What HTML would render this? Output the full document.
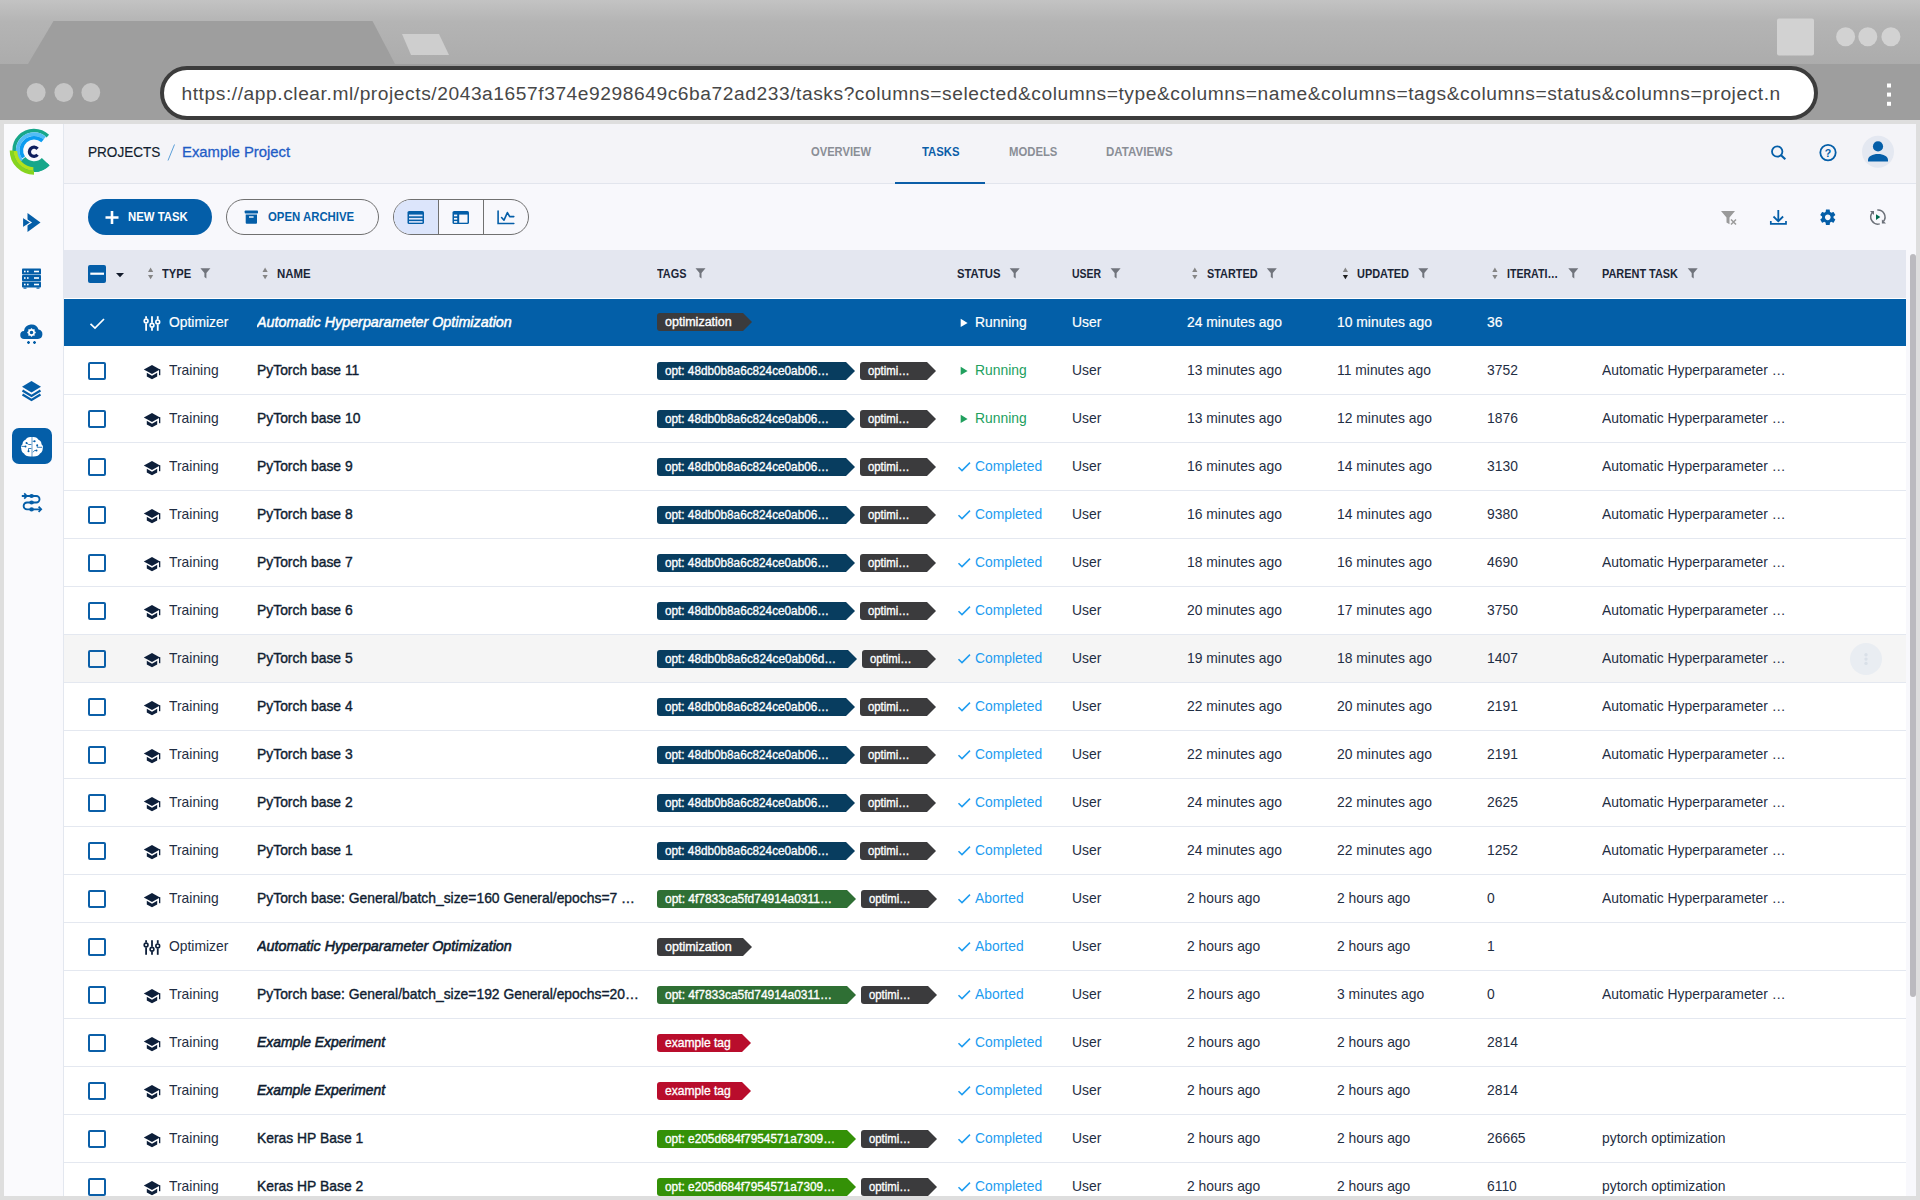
<!DOCTYPE html><html><head><meta charset="utf-8"><style>
*{box-sizing:border-box;margin:0;padding:0}
html,body{width:1920px;height:1200px;overflow:hidden}
body{background:#dedede;font-family:"Liberation Sans",sans-serif;position:relative}
.a{position:absolute}
.t{position:absolute;white-space:nowrap}
.sx{display:inline-block;transform-origin:0 50%}
svg{position:absolute;overflow:visible}
.row{position:absolute;left:64px;width:1842px;height:48px;background:#fff;overflow:hidden}
.row .t{line-height:48px;top:0;font-size:15px;color:#1f2e43;transform:scaleX(.925);transform-origin:0 0}
.row .nm{color:#0f1d31;-webkit-text-stroke:0.4px #0f1d31}
.row .it{font-style:italic;-webkit-text-stroke:0.6px currentColor}
.tag{position:absolute;top:15px;height:18px;line-height:18px;font-size:12.5px;-webkit-text-stroke:0.35px #fff;color:#fff;padding-left:8px;white-space:nowrap;overflow:hidden;border-radius:3px 0 0 3px}
.dv{position:absolute;left:64px;width:1842px;height:1px;background:#e4e8f0}
.cb{position:absolute;left:24px;top:16px;width:18px;height:18px;border:2px solid #0b5fa8;border-radius:2px}
.hd{position:absolute;top:250px;line-height:48px;font-size:12.5px;font-weight:bold;color:#1b2536;white-space:nowrap}
.hd .sx{transform:scaleX(.905)}
.nav{position:absolute;top:121.5px;line-height:60px;font-size:13px;font-weight:bold;color:#8a8e96;white-space:nowrap}
.nav .sx{transform:scaleX(.87)}
</style></head><body><div class="a" style="left:0;top:0;width:1920px;height:64px;background:linear-gradient(#c3c3c3 0px,#b4b4b4 22px,#acacac 64px)"></div>
<div class="a" style="left:0;top:64px;width:1920px;height:56px;background:#9e9e9e"></div>
<svg style="left:0;top:0" width="1920" height="120"><polygon points="28,64 53.5,21 372.5,21 395,64" fill="#9e9e9e"/><polygon points="402,34 439,34 449,55 411,55" fill="#cecece"/><circle cx="36.2" cy="92.5" r="9.4" fill="#c6c6c6"/><circle cx="63.8" cy="92.5" r="9.4" fill="#c6c6c6"/><circle cx="90.8" cy="92.5" r="9.4" fill="#c6c6c6"/><rect x="1777" y="18.5" width="37" height="37" rx="2" fill="#d2d2d2"/><circle cx="1845.6" cy="36.8" r="9.5" fill="#d2d2d2"/><circle cx="1867.8" cy="36.8" r="9.5" fill="#d2d2d2"/><circle cx="1890.9" cy="36.8" r="9.5" fill="#d2d2d2"/><rect x="1887" y="83.5" width="4" height="4" fill="#fff"/><rect x="1887" y="92.6" width="4" height="4" fill="#fff"/><rect x="1887" y="101.8" width="4" height="4" fill="#fff"/></svg>
<div class="a" style="left:160px;top:66px;width:1658px;height:54px;border:4px solid #3c3c3c;border-radius:27px;background:#fff"></div>
<div class="t" style="left:181.5px;top:82px;font-size:19.2px;letter-spacing:0.56px;line-height:24px;color:#474747">https://app.clear.ml/projects/2043a1657f374e9298649c6ba72ad233/tasks?columns=selected&amp;columns=type&amp;columns=name&amp;columns=tags&amp;columns=status&amp;columns=project.n</div>
<div class="a" style="left:4px;top:124px;width:1912px;height:1072px;background:#f8f8fc"></div>
<div class="a" style="left:4px;top:124px;width:60px;height:1072px;background:#fafafd;border-right:1px solid #e3e7ef"></div>
<div class="a" style="left:64px;top:124px;width:1852px;height:60px;background:#f4f4f8;border-bottom:1px solid #e2e5ed"></div>
<svg style="left:0;top:0" width="70" height="200"><path d="M45.65,161.65 A16.2,16.2 0 0 1 21.23,160.37" stroke="#17a78a" stroke-width="10.6" fill="none"/><path d="M48.31,164.22 A19.9,19.9 0 1 1 47.82,136.09" stroke="#17a78a" stroke-width="3.6" fill="none"/><path d="M21.51,160.88 A16.3,16.3 0 0 1 44.69,138.10" stroke="#52bdf5" stroke-width="3.6" fill="none"/><path d="M23.47,157.50 A12.7,12.7 0 0 1 42.50,140.96" stroke="#0b9cf0" stroke-width="3.6" fill="none"/><path d="M34.00,172.70 A22.3,22.3 0 0 1 11.70,150.40" stroke="#86d41e" stroke-width="4" fill="none"/><path d="M33.35,168.99 A18.6,18.6 0 0 1 15.41,151.05" stroke="#b2e21c" stroke-width="3.6" fill="none"/><path d="M37.52,154.76 A4.6,4.6 0 1 1 37.52,148.84" stroke="#0f1f5e" stroke-width="3.3" fill="none"/></svg>
<svg style="left:0;top:0" width="64" height="560"><polygon points="27.5,213 40.5,222.5 27.5,232" fill="#045ea8"/><polygon points="22.5,217 31,222.5 22.5,228" fill="#045ea8" stroke="#fafafd" stroke-width="1.2"/><rect x="22" y="268.5" width="19" height="6" rx="0.8" fill="#045ea8"/><rect x="24" y="270.7" width="1.6" height="1.6" fill="#fff"/><rect x="27" y="270.7" width="1.6" height="1.6" fill="#fff"/><rect x="34" y="270.7" width="5" height="1.6" fill="#fff"/><rect x="22" y="275" width="19" height="6" rx="0.8" fill="#045ea8"/><rect x="24" y="277.2" width="1.6" height="1.6" fill="#fff"/><rect x="27" y="277.2" width="1.6" height="1.6" fill="#fff"/><rect x="34" y="277.2" width="5" height="1.6" fill="#fff"/><rect x="22" y="281.5" width="19" height="6" rx="0.8" fill="#045ea8"/><rect x="24" y="283.7" width="1.6" height="1.6" fill="#fff"/><rect x="27" y="283.7" width="1.6" height="1.6" fill="#fff"/><rect x="34" y="283.7" width="5" height="1.6" fill="#fff"/><rect x="23.5" y="287.5" width="3" height="1.2" fill="#045ea8"/><rect x="36.5" y="287.5" width="3" height="1.2" fill="#045ea8"/><path d="M24.5,339 a4,4 0 0 1 -0.5,-8 a7.5,7.5 0 0 1 14.5,-1.5 a4.8,4.8 0 0 1 -0.5,9.5 z" fill="#045ea8"/><circle cx="31.5" cy="332.5" r="2.6" fill="none" stroke="#fff" stroke-width="1.6"/><line x1="34.10" y1="332.50" x2="35.70" y2="332.50" stroke="#fff" stroke-width="1.3"/><line x1="33.34" y1="334.34" x2="34.47" y2="335.47" stroke="#fff" stroke-width="1.3"/><line x1="31.50" y1="335.10" x2="31.50" y2="336.70" stroke="#fff" stroke-width="1.3"/><line x1="29.66" y1="334.34" x2="28.53" y2="335.47" stroke="#fff" stroke-width="1.3"/><line x1="28.90" y1="332.50" x2="27.30" y2="332.50" stroke="#fff" stroke-width="1.3"/><line x1="29.66" y1="330.66" x2="28.53" y2="329.53" stroke="#fff" stroke-width="1.3"/><line x1="31.50" y1="329.90" x2="31.50" y2="328.30" stroke="#fff" stroke-width="1.3"/><line x1="33.34" y1="330.66" x2="34.47" y2="329.53" stroke="#fff" stroke-width="1.3"/><path d="M27,342.5 h3 M28.5,341 v3 M33,342.5 h3 M34.5,341 v3" stroke="#045ea8" stroke-width="1.3"/><polygon points="22,386.8 31.5,381 41,386.8 31.5,392.5" fill="#045ea8"/><polyline points="22.5,390.5 31.5,396 40.5,390.5" fill="none" stroke="#045ea8" stroke-width="2.2"/><polyline points="22.5,394.5 31.5,400 40.5,394.5" fill="none" stroke="#045ea8" stroke-width="2.2"/><rect x="12" y="428" width="40" height="36" rx="7" fill="#045ea8"/><path d="M31.7,437 C28.5,436.6 26.5,437.8 25.5,439.8 C23.5,440.3 22.5,442.3 22.5,444.3 C21,445.3 20.6,447.3 21.3,448.5 C21.3,451 22.3,452.6 24,453.5 C25,455.5 27.5,456.7 31.7,456.4 Z" fill="#fff"/><path d="M32.3,437 C35.5,436.6 37.5,437.8 38.5,439.8 C40.5,440.3 41.5,442.3 41.5,444.3 C43,445.3 43.4,447.3 42.7,448.5 C42.7,451 41.7,452.6 40,453.5 C39,455.5 36.5,456.7 32.3,456.4 Z" fill="#fff"/><path d="M26.5,443 l2.2,1.5 h2.7 M21.5,446.4 h4 M28.5,451.3 v-2.8 h2.9 M32.6,441.3 h2 M37.2,445.3 v2 h5 M36.5,450.5 h-2 l-1.5,1.8" stroke="#045ea8" stroke-width="0.8" fill="none"/><circle cx="26.5" cy="443" r="1" fill="#045ea8"/><circle cx="25.5" cy="446.4" r="1" fill="#045ea8"/><circle cx="28.5" cy="451.3" r="1" fill="#045ea8"/><circle cx="34.6" cy="441.3" r="1" fill="#045ea8"/><circle cx="37.2" cy="445.3" r="1" fill="#045ea8"/><circle cx="36.5" cy="450.5" r="1" fill="#045ea8"/><path d="M21.8,496 H36.3 A3.25,3.25 0 0 1 36.3,502.5 H27 A3.4,3.4 0 0 0 27,509.3 H40.5" fill="none" stroke="#045ea8" stroke-width="1.8"/><ellipse cx="31.6" cy="496" rx="2.3" ry="2.1" fill="#045ea8"/><ellipse cx="31.6" cy="502.5" rx="2.3" ry="2.1" fill="#045ea8"/><ellipse cx="31.6" cy="509.4" rx="2.3" ry="2.1" fill="#045ea8"/><polyline points="24.2,493.4 26.8,496 24.2,498.6" fill="none" stroke="#045ea8" stroke-width="1.7"/><polyline points="38.6,506.7 41.2,509.3 38.6,511.9" fill="none" stroke="#045ea8" stroke-width="1.7"/></svg>
<div class="t" style="left:88px;top:121.5px;line-height:60px;font-size:15px;color:#121d2f;-webkit-text-stroke:0.15px #121d2f"><span class="sx" style="transform:scaleX(.905)">PROJECTS</span></div>
<svg style="left:0;top:0" width="10" height="10"><line x1="174.5" y1="144.5" x2="168" y2="160.5" stroke="#5b9fd8" stroke-width="1"/></svg>
<div class="t" style="left:181.5px;top:121.5px;line-height:60px;font-size:15px;color:#1f5cc6;-webkit-text-stroke:0.3px #1f5cc6"><span class="sx" style="transform:scaleX(.99)">Example Project</span></div>
<div class="nav" style="left:811px"><span class="sx" style="transform:scaleX(0.859)">OVERVIEW</span></div>
<div class="nav" style="left:922px;color:#0b5ea8"><span class="sx" style="transform:scaleX(0.870)">TASKS</span></div>
<div class="nav" style="left:1009.3px"><span class="sx" style="transform:scaleX(0.870)">MODELS</span></div>
<div class="nav" style="left:1106px"><span class="sx" style="transform:scaleX(0.888)">DATAVIEWS</span></div>
<div class="a" style="left:895px;top:182px;width:90px;height:2px;background:#0b5ea8"></div>
<svg style="left:0;top:0" width="10" height="10"><circle cx="1777.2" cy="151.5" r="5.2" fill="none" stroke="#045ea8" stroke-width="1.8"/><line x1="1780.8" y1="155" x2="1785.3" y2="159.3" stroke="#045ea8" stroke-width="2.1"/><circle cx="1828" cy="152.6" r="7.7" fill="none" stroke="#045ea8" stroke-width="1.8"/><text x="1828.1" y="156.8" text-anchor="middle" font-family="Liberation Sans" font-weight="bold" font-size="10.6" fill="#045ea8">?</text><circle cx="1878" cy="151.8" r="16" fill="#e4e8f1"/><circle cx="1878" cy="146.4" r="5.1" fill="#045ea8"/><path d="M1868,161.5 v-1.5 c0,-3.5 4.5,-6 10,-6 c5.5,0 10,2.5 10,6 v1.5 z" fill="#045ea8"/></svg>
<div class="a" style="left:88px;top:199px;width:124px;height:36px;border-radius:18px;background:#045ea8"></div>
<svg style="left:0;top:0" width="10" height="10"><path d="M112,211 v13 M105.5,217.5 h13" stroke="#fff" stroke-width="2.6"/></svg>
<div class="t" style="left:128.3px;top:199px;line-height:36px;font-size:12.5px;font-weight:bold;color:#fff"><span class="sx" style="transform:scaleX(.908)">NEW TASK</span></div>
<div class="a" style="left:226px;top:199px;width:153px;height:36px;border-radius:18px;border:1px solid #707070"></div>
<svg style="left:0;top:0" width="10" height="10"><rect x="244.7" y="210.5" width="13.3" height="3" rx="0.8" fill="#045ea8"/><path d="M245.7,214.5 h11.3 v8.3 a1,1 0 0 1 -1,1 h-9.3 a1,1 0 0 1 -1,-1 z" fill="#045ea8"/><rect x="249" y="216.3" width="4.6" height="1.4" fill="#f8f8fc"/></svg>
<div class="t" style="left:267.5px;top:199px;line-height:36px;font-size:12.5px;font-weight:bold;color:#045ea8"><span class="sx" style="transform:scaleX(.91)">OPEN ARCHIVE</span></div>
<div class="a" style="left:393px;top:199px;width:136px;height:36px;border-radius:18px;border:1px solid #707070;overflow:hidden"><div class="a" style="left:0;top:0;width:45px;height:34px;background:#dce5fb"></div><div class="a" style="left:44px;top:0;width:1px;height:34px;background:#707070"></div><div class="a" style="left:89px;top:0;width:1px;height:34px;background:#707070"></div></div>
<svg style="left:0;top:0" width="10" height="10"><rect x="407.5" y="210.9" width="16.5" height="13.1" rx="1.6" fill="#045ea8"/><rect x="409" y="214.6" width="13.5" height="1.7" fill="#dce5fb"/><rect x="409" y="217.9" width="13.5" height="1.7" fill="#dce5fb"/><rect x="409" y="221.1" width="13.5" height="1.6" fill="#dce5fb"/><rect x="452.5" y="210.9" width="16.5" height="13.1" rx="1.6" fill="#045ea8"/><rect x="454" y="214.6" width="3.2" height="1.7" fill="#f8f8fc"/><rect x="454" y="217.9" width="3.2" height="1.7" fill="#f8f8fc"/><rect x="454" y="221.1" width="3.2" height="1.6" fill="#f8f8fc"/><rect x="459.2" y="214.6" width="8.3" height="8.1" fill="#f8f8fc"/><path d="M498.1,211 v12.5 h15.7" fill="none" stroke="#045ea8" stroke-width="1.6" stroke-linecap="round"/><polyline points="501.6,217.5 504,220.2 507.4,212.6 509.7,216.6 513.8,216.6" fill="none" stroke="#045ea8" stroke-width="1.6" stroke-linecap="round" stroke-linejoin="round"/><polygon points="1721,211 1735,211 1729.5,217.5 1729.5,224.2 1726.5,222.5 1726.5,217.5" fill="#9a9a9a"/><path d="M1731,219.5 l5,5 M1736,219.5 l-5,5" stroke="#9a9a9a" stroke-width="1.5"/><path d="M1778.3,210 v11 M1773.5,216.5 l4.8,4.8 l4.8,-4.8" fill="none" stroke="#045ea8" stroke-width="1.8"/><path d="M1770.8,221 v2.8 h15.2 v-2.8" fill="none" stroke="#045ea8" stroke-width="1.7"/><path transform="translate(1818.2,207.7) scale(0.8)" fill-rule="evenodd" fill="#045ea8" d="M19.14,12.94c0.04-0.3,0.06-0.61,0.06-0.94c0-0.32-0.02-0.64-0.07-0.94l2.03-1.58c0.18-0.14,0.23-0.41,0.12-0.61 l-1.92-3.32c-0.12-0.22-0.37-0.29-0.59-0.22l-2.39,0.96c-0.5-0.38-1.03-0.7-1.62-0.94L14.4,2.81c-0.04-0.24-0.24-0.41-0.48-0.41 h-3.84c-0.24,0-0.43,0.17-0.47,0.41L9.25,5.35C8.66,5.59,8.12,5.92,7.63,6.29L5.240,5.33c-0.22-0.08-0.47,0-0.59,0.22L2.74,8.87 C2.62,9.08,2.66,9.340,2.86,9.48l2.03,1.58C4.84,11.36,4.8,11.69,4.8,12s0.02,0.64,0.07,0.94l-2.03,1.58 c-0.18,0.14-0.23,0.41-0.12,0.61l1.92,3.32c0.12,0.22,0.37,0.29,0.59,0.22l2.39-0.96c0.5,0.38,1.03,0.7,1.62,0.94l0.36,2.54 c0.05,0.24,0.24,0.41,0.48,0.41h3.84c0.24,0,0.44-0.17,0.47-0.41l0.36-2.54c0.59-0.24,1.13-0.56,1.62-0.94l2.39,0.96 c0.22,0.08,0.47,0,0.59-0.22l1.92-3.32c0.12-0.22,0.07-0.47-0.12-0.61L19.14,12.94z M12,15.6c-1.98,0-3.6-1.62-3.6-3.6 s1.62-3.6,3.6-3.6s3.6,1.62,3.6,3.6S13.98,15.6,12,15.6z"/><path d="M1879.74,223.86 A7.1,7.1 0 0 1 1872.62,212.25" fill="none" stroke="#6b7078" stroke-width="1.5"/><path d="M1877.28,209.93 A7.1,7.1 0 0 1 1883.49,221.37" fill="none" stroke="#6b7078" stroke-width="1.5"/><polygon points="1870,211 1874,211 1874,215" fill="#6b7078"/><polygon points="1881.9,219.5 1881.9,223.6 1886,223.6" fill="#6b7078"/><polygon points="1876,214.2 1880.3,217 1876,219.9" fill="#036b4f"/></svg>
<div class="a" style="left:64px;top:250px;width:1842px;height:48px;background:#e4e7f0"></div>
<svg style="left:0;top:0" width="10" height="10"><rect x="88" y="265" width="18" height="18" rx="2" fill="#045ea8"/><rect x="90.3" y="272.6" width="13.7" height="2.2" fill="#fff"/><polygon points="116,273 124,273 120,277.3" fill="#121a2a"/><polygon points="148,271.9 153.2,271.9 150.6,267.6" fill="#858585"/><polygon points="148,274.9 153.2,274.9 150.6,279.2" fill="#858585"/><polygon points="262.5,271.9 267.7,271.9 265.1,267.6" fill="#858585"/><polygon points="262.5,274.9 267.7,274.9 265.1,279.2" fill="#858585"/><polygon points="1192.2,271.9 1197.4,271.9 1194.8,267.6" fill="#858585"/><polygon points="1192.2,274.9 1197.4,274.9 1194.8,279.2" fill="#858585"/><polygon points="1492.3,271.9 1497.5,271.9 1494.8999999999999,267.6" fill="#858585"/><polygon points="1492.3,274.9 1497.5,274.9 1494.8999999999999,279.2" fill="#858585"/><polygon points="1342.8,271.9 1348.0,271.9 1345.3999999999999,267.6" fill="#858585"/><polygon points="1342.8,274.9 1348.0,274.9 1345.3999999999999,279.2" fill="#1e1e1e"/><polygon points="200.4,268.3 210.4,268.3 206.4,273 206.4,278.5 204.4,277 204.4,273" fill="#70747c"/><polygon points="695.5,268.3 705.5,268.3 701.5,273 701.5,278.5 699.5,277 699.5,273" fill="#70747c"/><polygon points="1009.7,268.3 1019.7,268.3 1015.7,273 1015.7,278.5 1013.7,277 1013.7,273" fill="#70747c"/><polygon points="1110.6,268.3 1120.6,268.3 1116.6,273 1116.6,278.5 1114.6,277 1114.6,273" fill="#70747c"/><polygon points="1266.8,268.3 1276.8,268.3 1272.8,273 1272.8,278.5 1270.8,277 1270.8,273" fill="#70747c"/><polygon points="1418.3,268.3 1428.3,268.3 1424.3,273 1424.3,278.5 1422.3,277 1422.3,273" fill="#70747c"/><polygon points="1568.3,268.3 1578.3,268.3 1574.3,273 1574.3,278.5 1572.3,277 1572.3,273" fill="#70747c"/><polygon points="1687.7,268.3 1697.7,268.3 1693.7,273 1693.7,278.5 1691.7,277 1691.7,273" fill="#70747c"/></svg>
<div class="hd" style="left:162px"><span class="sx" style="transform:scaleX(0.894)">TYPE</span></div>
<div class="hd" style="left:277.2px"><span class="sx" style="transform:scaleX(0.913)">NAME</span></div>
<div class="hd" style="left:657.3px"><span class="sx" style="transform:scaleX(0.870)">TAGS</span></div>
<div class="hd" style="left:957px"><span class="sx" style="transform:scaleX(0.903)">STATUS</span></div>
<div class="hd" style="left:1072.2px"><span class="sx" style="transform:scaleX(0.838)">USER</span></div>
<div class="hd" style="left:1207.2px"><span class="sx" style="transform:scaleX(0.871)">STARTED</span></div>
<div class="hd" style="left:1357.3px"><span class="sx" style="transform:scaleX(0.874)">UPDATED</span></div>
<div class="hd" style="left:1507.3px"><span class="sx" style="transform:scaleX(0.847)">ITERATI…</span></div>
<div class="hd" style="left:1602.3px"><span class="sx" style="transform:scaleX(0.873)">PARENT TASK</span></div>
<div class="row" style="top:298px;background:#035fa8"><div class="a" style="left:0;top:0;width:1842px;height:1px;background:#fff"></div><svg style="left:0;top:-0.5px" width="10" height="10"><polyline points="26.5,25.8 31,30.1 40,21" fill="none" stroke="#fff" stroke-width="1.7"/><line x1="82.1" y1="18.2" x2="82.1" y2="20.6" stroke="#fff" stroke-width="1.8"/><line x1="82.1" y1="25.4" x2="82.1" y2="32.8" stroke="#fff" stroke-width="1.8"/><circle cx="82.1" cy="23.0" r="1.9" fill="none" stroke="#fff" stroke-width="1.6"/><line x1="88.0" y1="18.2" x2="88.0" y2="24.85" stroke="#fff" stroke-width="1.8"/><line x1="88.0" y1="29.65" x2="88.0" y2="32.8" stroke="#fff" stroke-width="1.8"/><circle cx="88.0" cy="27.25" r="1.9" fill="none" stroke="#fff" stroke-width="1.6"/><line x1="93.75" y1="18.2" x2="93.75" y2="21.5" stroke="#fff" stroke-width="1.8"/><line x1="93.75" y1="26.299999999999997" x2="93.75" y2="32.8" stroke="#fff" stroke-width="1.8"/><circle cx="93.75" cy="23.9" r="1.9" fill="none" stroke="#fff" stroke-width="1.6"/><polygon points="896.7,20.8 903.6,24.9 896.7,29" fill="#fff"/></svg><div class="t" style="left:105.3px;color:#fff;top:-0.5px;-webkit-text-stroke:0.2px #fff">Optimizer</div><div class="t nm it" style="left:193.3px;width:418px;overflow:hidden;transform:scaleX(.955);width:405px;color:#fff;-webkit-text-stroke:0.5px #fff;top:-0.5px">Automatic Hyperparameter Optimization</div><div class="tag" style="top:15px;left:593px;width:95px;background:#3b3b3d;clip-path:polygon(0 0,86px 0,95px 9px,86px 18px,0 18px)"><span class="sx" style="transform:scaleX(1.001)">optimization</span></div><div class="t" style="left:911.4px;color:#fff;top:-0.5px;-webkit-text-stroke:0.2px #fff">Running</div><div class="t" style="left:1008.3px;color:#fff;top:-0.5px;-webkit-text-stroke:0.2px #fff">User</div><div class="t" style="left:1123px;color:#fff;top:-0.5px;-webkit-text-stroke:0.2px #fff">24 minutes ago</div><div class="t" style="left:1273px;color:#fff;top:-0.5px;-webkit-text-stroke:0.2px #fff">10 minutes ago</div><div class="t" style="left:1423px;color:#fff;top:-0.5px;-webkit-text-stroke:0.2px #fff">36</div></div>
<div class="row" style="top:346px;background:#fff"><div class="cb"></div><svg style="left:0;top:0" width="10" height="10"><polygon points="79.8,23.5 88,19 96,23.5 88,28" fill="#0d1f3a"/><path d="M82.8,26.8 v3.6 l5.2,2.8 l5.2,-2.8 v-3.6 l-5.2,2.9 z" fill="#0d1f3a"/><rect x="95" y="23.2" width="1.3" height="6" fill="#0d1f3a"/><polygon points="896.7,20.8 903.6,24.9 896.7,29" fill="#21a05e"/></svg><div class="t" style="left:105.3px">Training</div><div class="t nm" style="left:193.3px;width:418px;overflow:hidden">PyTorch base 11</div><div class="tag" style="top:16px;left:593px;width:198px;background:#083d5f;clip-path:polygon(0 0,189px 0,198px 9px,189px 18px,0 18px)"><span class="sx" style="transform:scaleX(0.940)">opt: 48db0b8a6c824ce0ab06…</span></div><div class="tag" style="top:16px;left:796px;width:76px;background:#3b3b3d;clip-path:polygon(0 0,67px 0,76px 9px,67px 18px,0 18px)"><span class="sx" style="transform:scaleX(0.905)">optimi…</span></div><div class="t" style="left:911.4px;color:#21a05e">Running</div><div class="t" style="left:1008.3px">User</div><div class="t" style="left:1123px">13 minutes ago</div><div class="t" style="left:1273px">11 minutes ago</div><div class="t" style="left:1423px">3752</div><div class="t" style="left:1538px">Automatic Hyperparameter …</div></div>
<div class="row" style="top:394px;background:#fff"><div class="a" style="left:0;top:0;width:1842px;height:1px;background:#e4e8f0"></div><div class="cb"></div><svg style="left:0;top:0" width="10" height="10"><polygon points="79.8,23.5 88,19 96,23.5 88,28" fill="#0d1f3a"/><path d="M82.8,26.8 v3.6 l5.2,2.8 l5.2,-2.8 v-3.6 l-5.2,2.9 z" fill="#0d1f3a"/><rect x="95" y="23.2" width="1.3" height="6" fill="#0d1f3a"/><polygon points="896.7,20.8 903.6,24.9 896.7,29" fill="#21a05e"/></svg><div class="t" style="left:105.3px">Training</div><div class="t nm" style="left:193.3px;width:418px;overflow:hidden">PyTorch base 10</div><div class="tag" style="top:16px;left:593px;width:198px;background:#083d5f;clip-path:polygon(0 0,189px 0,198px 9px,189px 18px,0 18px)"><span class="sx" style="transform:scaleX(0.940)">opt: 48db0b8a6c824ce0ab06…</span></div><div class="tag" style="top:16px;left:796px;width:76px;background:#3b3b3d;clip-path:polygon(0 0,67px 0,76px 9px,67px 18px,0 18px)"><span class="sx" style="transform:scaleX(0.905)">optimi…</span></div><div class="t" style="left:911.4px;color:#21a05e">Running</div><div class="t" style="left:1008.3px">User</div><div class="t" style="left:1123px">13 minutes ago</div><div class="t" style="left:1273px">12 minutes ago</div><div class="t" style="left:1423px">1876</div><div class="t" style="left:1538px">Automatic Hyperparameter …</div></div>
<div class="row" style="top:442px;background:#fff"><div class="a" style="left:0;top:0;width:1842px;height:1px;background:#e4e8f0"></div><div class="cb"></div><svg style="left:0;top:0" width="10" height="10"><polygon points="79.8,23.5 88,19 96,23.5 88,28" fill="#0d1f3a"/><path d="M82.8,26.8 v3.6 l5.2,2.8 l5.2,-2.8 v-3.6 l-5.2,2.9 z" fill="#0d1f3a"/><rect x="95" y="23.2" width="1.3" height="6" fill="#0d1f3a"/><polyline points="894.5,25.2 898,28.6 906,20.6" fill="none" stroke="#1d9cf0" stroke-width="1.5"/></svg><div class="t" style="left:105.3px">Training</div><div class="t nm" style="left:193.3px;width:418px;overflow:hidden">PyTorch base 9</div><div class="tag" style="top:16px;left:593px;width:198px;background:#083d5f;clip-path:polygon(0 0,189px 0,198px 9px,189px 18px,0 18px)"><span class="sx" style="transform:scaleX(0.940)">opt: 48db0b8a6c824ce0ab06…</span></div><div class="tag" style="top:16px;left:796px;width:76px;background:#3b3b3d;clip-path:polygon(0 0,67px 0,76px 9px,67px 18px,0 18px)"><span class="sx" style="transform:scaleX(0.905)">optimi…</span></div><div class="t" style="left:911.4px;color:#1d9cf0">Completed</div><div class="t" style="left:1008.3px">User</div><div class="t" style="left:1123px">16 minutes ago</div><div class="t" style="left:1273px">14 minutes ago</div><div class="t" style="left:1423px">3130</div><div class="t" style="left:1538px">Automatic Hyperparameter …</div></div>
<div class="row" style="top:490px;background:#fff"><div class="a" style="left:0;top:0;width:1842px;height:1px;background:#e4e8f0"></div><div class="cb"></div><svg style="left:0;top:0" width="10" height="10"><polygon points="79.8,23.5 88,19 96,23.5 88,28" fill="#0d1f3a"/><path d="M82.8,26.8 v3.6 l5.2,2.8 l5.2,-2.8 v-3.6 l-5.2,2.9 z" fill="#0d1f3a"/><rect x="95" y="23.2" width="1.3" height="6" fill="#0d1f3a"/><polyline points="894.5,25.2 898,28.6 906,20.6" fill="none" stroke="#1d9cf0" stroke-width="1.5"/></svg><div class="t" style="left:105.3px">Training</div><div class="t nm" style="left:193.3px;width:418px;overflow:hidden">PyTorch base 8</div><div class="tag" style="top:16px;left:593px;width:198px;background:#083d5f;clip-path:polygon(0 0,189px 0,198px 9px,189px 18px,0 18px)"><span class="sx" style="transform:scaleX(0.940)">opt: 48db0b8a6c824ce0ab06…</span></div><div class="tag" style="top:16px;left:796px;width:76px;background:#3b3b3d;clip-path:polygon(0 0,67px 0,76px 9px,67px 18px,0 18px)"><span class="sx" style="transform:scaleX(0.905)">optimi…</span></div><div class="t" style="left:911.4px;color:#1d9cf0">Completed</div><div class="t" style="left:1008.3px">User</div><div class="t" style="left:1123px">16 minutes ago</div><div class="t" style="left:1273px">14 minutes ago</div><div class="t" style="left:1423px">9380</div><div class="t" style="left:1538px">Automatic Hyperparameter …</div></div>
<div class="row" style="top:538px;background:#fff"><div class="a" style="left:0;top:0;width:1842px;height:1px;background:#e4e8f0"></div><div class="cb"></div><svg style="left:0;top:0" width="10" height="10"><polygon points="79.8,23.5 88,19 96,23.5 88,28" fill="#0d1f3a"/><path d="M82.8,26.8 v3.6 l5.2,2.8 l5.2,-2.8 v-3.6 l-5.2,2.9 z" fill="#0d1f3a"/><rect x="95" y="23.2" width="1.3" height="6" fill="#0d1f3a"/><polyline points="894.5,25.2 898,28.6 906,20.6" fill="none" stroke="#1d9cf0" stroke-width="1.5"/></svg><div class="t" style="left:105.3px">Training</div><div class="t nm" style="left:193.3px;width:418px;overflow:hidden">PyTorch base 7</div><div class="tag" style="top:16px;left:593px;width:198px;background:#083d5f;clip-path:polygon(0 0,189px 0,198px 9px,189px 18px,0 18px)"><span class="sx" style="transform:scaleX(0.940)">opt: 48db0b8a6c824ce0ab06…</span></div><div class="tag" style="top:16px;left:796px;width:76px;background:#3b3b3d;clip-path:polygon(0 0,67px 0,76px 9px,67px 18px,0 18px)"><span class="sx" style="transform:scaleX(0.905)">optimi…</span></div><div class="t" style="left:911.4px;color:#1d9cf0">Completed</div><div class="t" style="left:1008.3px">User</div><div class="t" style="left:1123px">18 minutes ago</div><div class="t" style="left:1273px">16 minutes ago</div><div class="t" style="left:1423px">4690</div><div class="t" style="left:1538px">Automatic Hyperparameter …</div></div>
<div class="row" style="top:586px;background:#fff"><div class="a" style="left:0;top:0;width:1842px;height:1px;background:#e4e8f0"></div><div class="cb"></div><svg style="left:0;top:0" width="10" height="10"><polygon points="79.8,23.5 88,19 96,23.5 88,28" fill="#0d1f3a"/><path d="M82.8,26.8 v3.6 l5.2,2.8 l5.2,-2.8 v-3.6 l-5.2,2.9 z" fill="#0d1f3a"/><rect x="95" y="23.2" width="1.3" height="6" fill="#0d1f3a"/><polyline points="894.5,25.2 898,28.6 906,20.6" fill="none" stroke="#1d9cf0" stroke-width="1.5"/></svg><div class="t" style="left:105.3px">Training</div><div class="t nm" style="left:193.3px;width:418px;overflow:hidden">PyTorch base 6</div><div class="tag" style="top:16px;left:593px;width:198px;background:#083d5f;clip-path:polygon(0 0,189px 0,198px 9px,189px 18px,0 18px)"><span class="sx" style="transform:scaleX(0.940)">opt: 48db0b8a6c824ce0ab06…</span></div><div class="tag" style="top:16px;left:796px;width:76px;background:#3b3b3d;clip-path:polygon(0 0,67px 0,76px 9px,67px 18px,0 18px)"><span class="sx" style="transform:scaleX(0.905)">optimi…</span></div><div class="t" style="left:911.4px;color:#1d9cf0">Completed</div><div class="t" style="left:1008.3px">User</div><div class="t" style="left:1123px">20 minutes ago</div><div class="t" style="left:1273px">17 minutes ago</div><div class="t" style="left:1423px">3750</div><div class="t" style="left:1538px">Automatic Hyperparameter …</div></div>
<div class="row" style="top:634px;background:#f5f5f5"><div class="a" style="left:0;top:0;width:1842px;height:1px;background:#e4e8f0"></div><div class="cb"></div><svg style="left:0;top:0" width="10" height="10"><polygon points="79.8,23.5 88,19 96,23.5 88,28" fill="#0d1f3a"/><path d="M82.8,26.8 v3.6 l5.2,2.8 l5.2,-2.8 v-3.6 l-5.2,2.9 z" fill="#0d1f3a"/><rect x="95" y="23.2" width="1.3" height="6" fill="#0d1f3a"/><polyline points="894.5,25.2 898,28.6 906,20.6" fill="none" stroke="#1d9cf0" stroke-width="1.5"/></svg><div class="t" style="left:105.3px">Training</div><div class="t nm" style="left:193.3px;width:418px;overflow:hidden">PyTorch base 5</div><div class="tag" style="top:16px;left:593px;width:200px;background:#083d5f;clip-path:polygon(0 0,191px 0,200px 9px,191px 18px,0 18px)"><span class="sx" style="transform:scaleX(0.943)">opt: 48db0b8a6c824ce0ab06d…</span></div><div class="tag" style="top:16px;left:798px;width:74px;background:#3b3b3d;clip-path:polygon(0 0,65px 0,74px 9px,65px 18px,0 18px)"><span class="sx" style="transform:scaleX(0.905)">optimi…</span></div><div class="t" style="left:911.4px;color:#1d9cf0">Completed</div><div class="t" style="left:1008.3px">User</div><div class="t" style="left:1123px">19 minutes ago</div><div class="t" style="left:1273px">18 minutes ago</div><div class="t" style="left:1423px">1407</div><div class="t" style="left:1538px">Automatic Hyperparameter …</div><div class="a" style="left:1786px;top:9px;width:32px;height:32px;border-radius:16px;background:#e9edf2"></div><svg style="left:0;top:0" width="10" height="10"><circle cx="1802" cy="20.8" r="1.7" fill="#d9e0e8"/><circle cx="1802" cy="25.1" r="1.7" fill="#d9e0e8"/><circle cx="1802" cy="29.4" r="1.7" fill="#d9e0e8"/></svg></div>
<div class="row" style="top:682px;background:#fff"><div class="a" style="left:0;top:0;width:1842px;height:1px;background:#e4e8f0"></div><div class="cb"></div><svg style="left:0;top:0" width="10" height="10"><polygon points="79.8,23.5 88,19 96,23.5 88,28" fill="#0d1f3a"/><path d="M82.8,26.8 v3.6 l5.2,2.8 l5.2,-2.8 v-3.6 l-5.2,2.9 z" fill="#0d1f3a"/><rect x="95" y="23.2" width="1.3" height="6" fill="#0d1f3a"/><polyline points="894.5,25.2 898,28.6 906,20.6" fill="none" stroke="#1d9cf0" stroke-width="1.5"/></svg><div class="t" style="left:105.3px">Training</div><div class="t nm" style="left:193.3px;width:418px;overflow:hidden">PyTorch base 4</div><div class="tag" style="top:16px;left:593px;width:198px;background:#083d5f;clip-path:polygon(0 0,189px 0,198px 9px,189px 18px,0 18px)"><span class="sx" style="transform:scaleX(0.940)">opt: 48db0b8a6c824ce0ab06…</span></div><div class="tag" style="top:16px;left:796px;width:76px;background:#3b3b3d;clip-path:polygon(0 0,67px 0,76px 9px,67px 18px,0 18px)"><span class="sx" style="transform:scaleX(0.905)">optimi…</span></div><div class="t" style="left:911.4px;color:#1d9cf0">Completed</div><div class="t" style="left:1008.3px">User</div><div class="t" style="left:1123px">22 minutes ago</div><div class="t" style="left:1273px">20 minutes ago</div><div class="t" style="left:1423px">2191</div><div class="t" style="left:1538px">Automatic Hyperparameter …</div></div>
<div class="row" style="top:730px;background:#fff"><div class="a" style="left:0;top:0;width:1842px;height:1px;background:#e4e8f0"></div><div class="cb"></div><svg style="left:0;top:0" width="10" height="10"><polygon points="79.8,23.5 88,19 96,23.5 88,28" fill="#0d1f3a"/><path d="M82.8,26.8 v3.6 l5.2,2.8 l5.2,-2.8 v-3.6 l-5.2,2.9 z" fill="#0d1f3a"/><rect x="95" y="23.2" width="1.3" height="6" fill="#0d1f3a"/><polyline points="894.5,25.2 898,28.6 906,20.6" fill="none" stroke="#1d9cf0" stroke-width="1.5"/></svg><div class="t" style="left:105.3px">Training</div><div class="t nm" style="left:193.3px;width:418px;overflow:hidden">PyTorch base 3</div><div class="tag" style="top:16px;left:593px;width:198px;background:#083d5f;clip-path:polygon(0 0,189px 0,198px 9px,189px 18px,0 18px)"><span class="sx" style="transform:scaleX(0.940)">opt: 48db0b8a6c824ce0ab06…</span></div><div class="tag" style="top:16px;left:796px;width:76px;background:#3b3b3d;clip-path:polygon(0 0,67px 0,76px 9px,67px 18px,0 18px)"><span class="sx" style="transform:scaleX(0.905)">optimi…</span></div><div class="t" style="left:911.4px;color:#1d9cf0">Completed</div><div class="t" style="left:1008.3px">User</div><div class="t" style="left:1123px">22 minutes ago</div><div class="t" style="left:1273px">20 minutes ago</div><div class="t" style="left:1423px">2191</div><div class="t" style="left:1538px">Automatic Hyperparameter …</div></div>
<div class="row" style="top:778px;background:#fff"><div class="a" style="left:0;top:0;width:1842px;height:1px;background:#e4e8f0"></div><div class="cb"></div><svg style="left:0;top:0" width="10" height="10"><polygon points="79.8,23.5 88,19 96,23.5 88,28" fill="#0d1f3a"/><path d="M82.8,26.8 v3.6 l5.2,2.8 l5.2,-2.8 v-3.6 l-5.2,2.9 z" fill="#0d1f3a"/><rect x="95" y="23.2" width="1.3" height="6" fill="#0d1f3a"/><polyline points="894.5,25.2 898,28.6 906,20.6" fill="none" stroke="#1d9cf0" stroke-width="1.5"/></svg><div class="t" style="left:105.3px">Training</div><div class="t nm" style="left:193.3px;width:418px;overflow:hidden">PyTorch base 2</div><div class="tag" style="top:16px;left:593px;width:198px;background:#083d5f;clip-path:polygon(0 0,189px 0,198px 9px,189px 18px,0 18px)"><span class="sx" style="transform:scaleX(0.940)">opt: 48db0b8a6c824ce0ab06…</span></div><div class="tag" style="top:16px;left:796px;width:76px;background:#3b3b3d;clip-path:polygon(0 0,67px 0,76px 9px,67px 18px,0 18px)"><span class="sx" style="transform:scaleX(0.905)">optimi…</span></div><div class="t" style="left:911.4px;color:#1d9cf0">Completed</div><div class="t" style="left:1008.3px">User</div><div class="t" style="left:1123px">24 minutes ago</div><div class="t" style="left:1273px">22 minutes ago</div><div class="t" style="left:1423px">2625</div><div class="t" style="left:1538px">Automatic Hyperparameter …</div></div>
<div class="row" style="top:826px;background:#fff"><div class="a" style="left:0;top:0;width:1842px;height:1px;background:#e4e8f0"></div><div class="cb"></div><svg style="left:0;top:0" width="10" height="10"><polygon points="79.8,23.5 88,19 96,23.5 88,28" fill="#0d1f3a"/><path d="M82.8,26.8 v3.6 l5.2,2.8 l5.2,-2.8 v-3.6 l-5.2,2.9 z" fill="#0d1f3a"/><rect x="95" y="23.2" width="1.3" height="6" fill="#0d1f3a"/><polyline points="894.5,25.2 898,28.6 906,20.6" fill="none" stroke="#1d9cf0" stroke-width="1.5"/></svg><div class="t" style="left:105.3px">Training</div><div class="t nm" style="left:193.3px;width:418px;overflow:hidden">PyTorch base 1</div><div class="tag" style="top:16px;left:593px;width:198px;background:#083d5f;clip-path:polygon(0 0,189px 0,198px 9px,189px 18px,0 18px)"><span class="sx" style="transform:scaleX(0.940)">opt: 48db0b8a6c824ce0ab06…</span></div><div class="tag" style="top:16px;left:796px;width:76px;background:#3b3b3d;clip-path:polygon(0 0,67px 0,76px 9px,67px 18px,0 18px)"><span class="sx" style="transform:scaleX(0.905)">optimi…</span></div><div class="t" style="left:911.4px;color:#1d9cf0">Completed</div><div class="t" style="left:1008.3px">User</div><div class="t" style="left:1123px">24 minutes ago</div><div class="t" style="left:1273px">22 minutes ago</div><div class="t" style="left:1423px">1252</div><div class="t" style="left:1538px">Automatic Hyperparameter …</div></div>
<div class="row" style="top:874px;background:#fff"><div class="a" style="left:0;top:0;width:1842px;height:1px;background:#e4e8f0"></div><div class="cb"></div><svg style="left:0;top:0" width="10" height="10"><polygon points="79.8,23.5 88,19 96,23.5 88,28" fill="#0d1f3a"/><path d="M82.8,26.8 v3.6 l5.2,2.8 l5.2,-2.8 v-3.6 l-5.2,2.9 z" fill="#0d1f3a"/><rect x="95" y="23.2" width="1.3" height="6" fill="#0d1f3a"/><polyline points="894.5,25.2 898,28.6 906,20.6" fill="none" stroke="#1d9cf0" stroke-width="1.5"/></svg><div class="t" style="left:105.3px">Training</div><div class="t nm" style="left:193.3px;width:418px;overflow:hidden">PyTorch base: General/batch_size=160 General/epochs=7 …</div><div class="tag" style="top:16px;left:593px;width:199px;background:#2f6f34;clip-path:polygon(0 0,190px 0,199px 9px,190px 18px,0 18px)"><span class="sx" style="transform:scaleX(0.958)">opt: 4f7833ca5fd74914a0311…</span></div><div class="tag" style="top:16px;left:797px;width:76px;background:#3b3b3d;clip-path:polygon(0 0,67px 0,76px 9px,67px 18px,0 18px)"><span class="sx" style="transform:scaleX(0.905)">optimi…</span></div><div class="t" style="left:911.4px;color:#1d9cf0">Aborted</div><div class="t" style="left:1008.3px">User</div><div class="t" style="left:1123px">2 hours ago</div><div class="t" style="left:1273px">2 hours ago</div><div class="t" style="left:1423px">0</div><div class="t" style="left:1538px">Automatic Hyperparameter …</div></div>
<div class="row" style="top:922px;background:#fff"><div class="a" style="left:0;top:0;width:1842px;height:1px;background:#e4e8f0"></div><div class="cb"></div><svg style="left:0;top:0" width="10" height="10"><line x1="82.1" y1="18.2" x2="82.1" y2="20.6" stroke="#0d1f3a" stroke-width="1.8"/><line x1="82.1" y1="25.4" x2="82.1" y2="32.8" stroke="#0d1f3a" stroke-width="1.8"/><circle cx="82.1" cy="23.0" r="1.9" fill="none" stroke="#0d1f3a" stroke-width="1.6"/><line x1="88.0" y1="18.2" x2="88.0" y2="24.85" stroke="#0d1f3a" stroke-width="1.8"/><line x1="88.0" y1="29.65" x2="88.0" y2="32.8" stroke="#0d1f3a" stroke-width="1.8"/><circle cx="88.0" cy="27.25" r="1.9" fill="none" stroke="#0d1f3a" stroke-width="1.6"/><line x1="93.75" y1="18.2" x2="93.75" y2="21.5" stroke="#0d1f3a" stroke-width="1.8"/><line x1="93.75" y1="26.299999999999997" x2="93.75" y2="32.8" stroke="#0d1f3a" stroke-width="1.8"/><circle cx="93.75" cy="23.9" r="1.9" fill="none" stroke="#0d1f3a" stroke-width="1.6"/><polyline points="894.5,25.2 898,28.6 906,20.6" fill="none" stroke="#1d9cf0" stroke-width="1.5"/></svg><div class="t" style="left:105.3px">Optimizer</div><div class="t nm it" style="left:193.3px;width:418px;overflow:hidden;transform:scaleX(.955);width:405px">Automatic Hyperparameter Optimization</div><div class="tag" style="top:16px;left:593px;width:95px;background:#3b3b3d;clip-path:polygon(0 0,86px 0,95px 9px,86px 18px,0 18px)"><span class="sx" style="transform:scaleX(1.001)">optimization</span></div><div class="t" style="left:911.4px;color:#1d9cf0">Aborted</div><div class="t" style="left:1008.3px">User</div><div class="t" style="left:1123px">2 hours ago</div><div class="t" style="left:1273px">2 hours ago</div><div class="t" style="left:1423px">1</div></div>
<div class="row" style="top:970px;background:#fff"><div class="a" style="left:0;top:0;width:1842px;height:1px;background:#e4e8f0"></div><div class="cb"></div><svg style="left:0;top:0" width="10" height="10"><polygon points="79.8,23.5 88,19 96,23.5 88,28" fill="#0d1f3a"/><path d="M82.8,26.8 v3.6 l5.2,2.8 l5.2,-2.8 v-3.6 l-5.2,2.9 z" fill="#0d1f3a"/><rect x="95" y="23.2" width="1.3" height="6" fill="#0d1f3a"/><polyline points="894.5,25.2 898,28.6 906,20.6" fill="none" stroke="#1d9cf0" stroke-width="1.5"/></svg><div class="t" style="left:105.3px">Training</div><div class="t nm" style="left:193.3px;width:418px;overflow:hidden">PyTorch base: General/batch_size=192 General/epochs=20…</div><div class="tag" style="top:16px;left:593px;width:199px;background:#2f6f34;clip-path:polygon(0 0,190px 0,199px 9px,190px 18px,0 18px)"><span class="sx" style="transform:scaleX(0.958)">opt: 4f7833ca5fd74914a0311…</span></div><div class="tag" style="top:16px;left:797px;width:76px;background:#3b3b3d;clip-path:polygon(0 0,67px 0,76px 9px,67px 18px,0 18px)"><span class="sx" style="transform:scaleX(0.905)">optimi…</span></div><div class="t" style="left:911.4px;color:#1d9cf0">Aborted</div><div class="t" style="left:1008.3px">User</div><div class="t" style="left:1123px">2 hours ago</div><div class="t" style="left:1273px">3 minutes ago</div><div class="t" style="left:1423px">0</div><div class="t" style="left:1538px">Automatic Hyperparameter …</div></div>
<div class="row" style="top:1018px;background:#fff"><div class="a" style="left:0;top:0;width:1842px;height:1px;background:#e4e8f0"></div><div class="cb"></div><svg style="left:0;top:0" width="10" height="10"><polygon points="79.8,23.5 88,19 96,23.5 88,28" fill="#0d1f3a"/><path d="M82.8,26.8 v3.6 l5.2,2.8 l5.2,-2.8 v-3.6 l-5.2,2.9 z" fill="#0d1f3a"/><rect x="95" y="23.2" width="1.3" height="6" fill="#0d1f3a"/><polyline points="894.5,25.2 898,28.6 906,20.6" fill="none" stroke="#1d9cf0" stroke-width="1.5"/></svg><div class="t" style="left:105.3px">Training</div><div class="t nm it" style="left:193.3px;width:418px;overflow:hidden">Example Experiment</div><div class="tag" style="top:16px;left:593px;width:94px;background:#b90d2c;clip-path:polygon(0 0,85px 0,94px 9px,85px 18px,0 18px)"><span class="sx" style="transform:scaleX(0.965)">example tag</span></div><div class="t" style="left:911.4px;color:#1d9cf0">Completed</div><div class="t" style="left:1008.3px">User</div><div class="t" style="left:1123px">2 hours ago</div><div class="t" style="left:1273px">2 hours ago</div><div class="t" style="left:1423px">2814</div></div>
<div class="row" style="top:1066px;background:#fff"><div class="a" style="left:0;top:0;width:1842px;height:1px;background:#e4e8f0"></div><div class="cb"></div><svg style="left:0;top:0" width="10" height="10"><polygon points="79.8,23.5 88,19 96,23.5 88,28" fill="#0d1f3a"/><path d="M82.8,26.8 v3.6 l5.2,2.8 l5.2,-2.8 v-3.6 l-5.2,2.9 z" fill="#0d1f3a"/><rect x="95" y="23.2" width="1.3" height="6" fill="#0d1f3a"/><polyline points="894.5,25.2 898,28.6 906,20.6" fill="none" stroke="#1d9cf0" stroke-width="1.5"/></svg><div class="t" style="left:105.3px">Training</div><div class="t nm it" style="left:193.3px;width:418px;overflow:hidden">Example Experiment</div><div class="tag" style="top:16px;left:593px;width:94px;background:#b90d2c;clip-path:polygon(0 0,85px 0,94px 9px,85px 18px,0 18px)"><span class="sx" style="transform:scaleX(0.965)">example tag</span></div><div class="t" style="left:911.4px;color:#1d9cf0">Completed</div><div class="t" style="left:1008.3px">User</div><div class="t" style="left:1123px">2 hours ago</div><div class="t" style="left:1273px">2 hours ago</div><div class="t" style="left:1423px">2814</div></div>
<div class="row" style="top:1114px;background:#fff"><div class="a" style="left:0;top:0;width:1842px;height:1px;background:#e4e8f0"></div><div class="cb"></div><svg style="left:0;top:0" width="10" height="10"><polygon points="79.8,23.5 88,19 96,23.5 88,28" fill="#0d1f3a"/><path d="M82.8,26.8 v3.6 l5.2,2.8 l5.2,-2.8 v-3.6 l-5.2,2.9 z" fill="#0d1f3a"/><rect x="95" y="23.2" width="1.3" height="6" fill="#0d1f3a"/><polyline points="894.5,25.2 898,28.6 906,20.6" fill="none" stroke="#1d9cf0" stroke-width="1.5"/></svg><div class="t" style="left:105.3px">Training</div><div class="t nm" style="left:193.3px;width:418px;overflow:hidden">Keras HP Base 1</div><div class="tag" style="top:16px;left:593px;width:199px;background:#349107;clip-path:polygon(0 0,190px 0,199px 9px,190px 18px,0 18px)"><span class="sx" style="transform:scaleX(0.948)">opt: e205d684f7954571a7309…</span></div><div class="tag" style="top:16px;left:797px;width:76px;background:#3b3b3d;clip-path:polygon(0 0,67px 0,76px 9px,67px 18px,0 18px)"><span class="sx" style="transform:scaleX(0.905)">optimi…</span></div><div class="t" style="left:911.4px;color:#1d9cf0">Completed</div><div class="t" style="left:1008.3px">User</div><div class="t" style="left:1123px">2 hours ago</div><div class="t" style="left:1273px">2 hours ago</div><div class="t" style="left:1423px">26665</div><div class="t" style="left:1538px">pytorch optimization</div></div>
<div class="row" style="top:1162px;background:#fff"><div class="a" style="left:0;top:0;width:1842px;height:1px;background:#e4e8f0"></div><div class="cb"></div><svg style="left:0;top:0" width="10" height="10"><polygon points="79.8,23.5 88,19 96,23.5 88,28" fill="#0d1f3a"/><path d="M82.8,26.8 v3.6 l5.2,2.8 l5.2,-2.8 v-3.6 l-5.2,2.9 z" fill="#0d1f3a"/><rect x="95" y="23.2" width="1.3" height="6" fill="#0d1f3a"/><polyline points="894.5,25.2 898,28.6 906,20.6" fill="none" stroke="#1d9cf0" stroke-width="1.5"/></svg><div class="t" style="left:105.3px">Training</div><div class="t nm" style="left:193.3px;width:418px;overflow:hidden">Keras HP Base 2</div><div class="tag" style="top:16px;left:593px;width:199px;background:#349107;clip-path:polygon(0 0,190px 0,199px 9px,190px 18px,0 18px)"><span class="sx" style="transform:scaleX(0.948)">opt: e205d684f7954571a7309…</span></div><div class="tag" style="top:16px;left:797px;width:76px;background:#3b3b3d;clip-path:polygon(0 0,67px 0,76px 9px,67px 18px,0 18px)"><span class="sx" style="transform:scaleX(0.905)">optimi…</span></div><div class="t" style="left:911.4px;color:#1d9cf0">Completed</div><div class="t" style="left:1008.3px">User</div><div class="t" style="left:1123px">2 hours ago</div><div class="t" style="left:1273px">2 hours ago</div><div class="t" style="left:1423px">6110</div><div class="t" style="left:1538px">pytorch optimization</div></div>
<div class="a" style="left:1910px;top:254px;width:6px;height:743px;border-radius:3px;background:#bbbabf"></div>
<div class="a" style="left:0;top:1196px;width:1920px;height:4px;background:#dedede"></div>
<div class="a" style="left:1916px;top:120px;width:4px;height:1080px;background:#dedede"></div></body></html>
